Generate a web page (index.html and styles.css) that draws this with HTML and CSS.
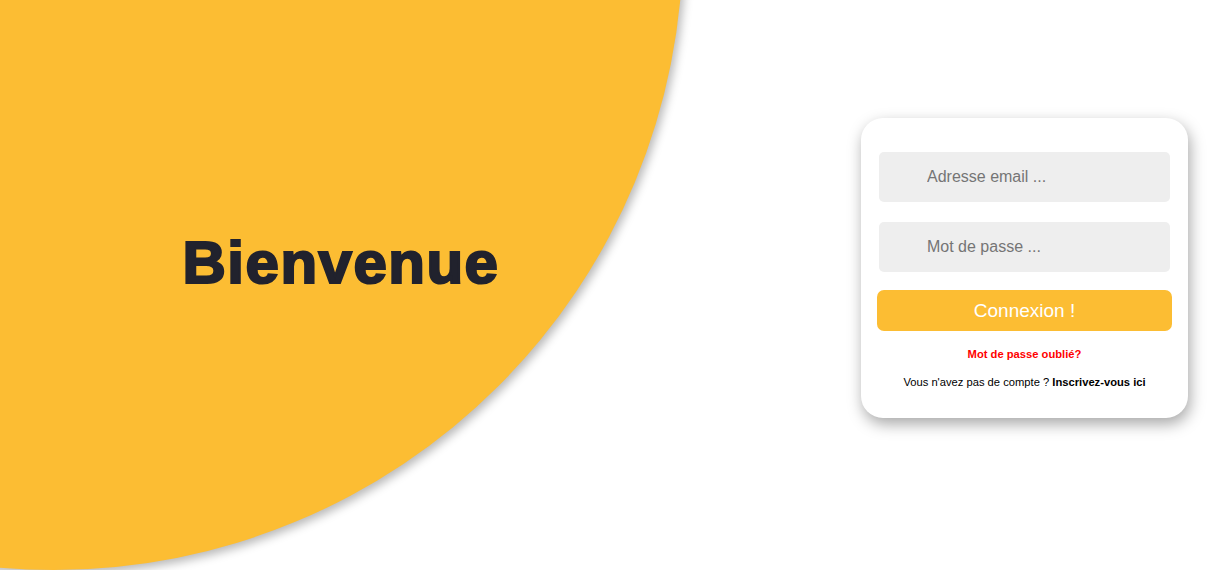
FILE: index.html
```html
<!DOCTYPE html>
<html lang="fr">
<head>
<meta charset="utf-8">
<title>Connexion</title>
<link rel="stylesheet" href="styles.css">
</head>
<body>
<main class="page">
  <section class="welcome">
    <h1 class="welcome-title">Bienvenue</h1>
  </section>
  <section class="auth">
    <form class="card">
      <input class="field" type="email" placeholder="Adresse email ...">
      <input class="field field-gap" type="password" placeholder="Mot de passe ...">
      <button class="submit" type="button">Connexion !</button>
      <a class="forgot" href="#">Mot de passe oublié?</a>
      <p class="signup">Vous n'avez pas de compte ? <a class="signup-link" href="#">Inscrivez-vous ici</a></p>
    </form>
  </section>
</main>
</body>
</html>
```
FILE: styles.css
```css
* { box-sizing: border-box; }

html, body {
  margin: 0;
  padding: 0;
  height: 100%;
  background: #ffffff;
  font-family: "Liberation Sans", Arial, sans-serif;
  overflow: hidden;
}

.page {
  position: relative;
  display: flex;
  height: 100vh;
  overflow: hidden;
}

.page::before {
  content: "";
  position: absolute;
  left: -575px;
  top: -688px;
  width: 1258px;
  height: 1258px;
  border-radius: 50%;
  background: #fcbd33;
  box-shadow: 3px 4px 10px rgba(0, 0, 0, 0.28);
  z-index: 0;
}

.welcome {
  position: relative;
  z-index: 1;
  width: 682px;
  display: flex;
  align-items: center;
  justify-content: center;
  padding-bottom: 46px;
}

.welcome-title {
  margin: 0;
  font-size: 60px;
  font-weight: 700;
  line-height: 69px;
  letter-spacing: 1.5px;
  color: #21222d;
  -webkit-text-stroke: 2.2px #21222d;
}

.auth {
  position: relative;
  z-index: 1;
  flex: 1;
  display: flex;
  align-items: center;
  justify-content: flex-end;
  padding-right: 20px;
  padding-bottom: 34px;
}

.card {
  width: 327px;
  height: 300px;
  background: #ffffff;
  border-radius: 22px;
  box-shadow: 2px 6px 15px rgba(0, 0, 0, 0.35);
  display: flex;
  flex-direction: column;
  align-items: center;
  padding-top: 34px;
}

.field {
  width: 291px;
  height: 50px;
  border: none;
  border-radius: 5px;
  background: #eeeeee;
  padding: 0 0 0 48px;
  font-family: "Liberation Sans", Arial, sans-serif;
  font-size: 16px;
  color: #333;
  outline: none;
}

.field::placeholder { color: #757575; }

.field-gap { margin-top: 20px; }

.submit {
  margin-top: 18px;
  width: 295px;
  height: 41px;
  border: none;
  border-radius: 7px;
  background: #fcbd33;
  color: #ffffff;
  font-family: "Liberation Sans", Arial, sans-serif;
  font-size: 19px;
  cursor: pointer;
}

.forgot {
  margin-top: 16px;
  font-size: 11.2px;
  font-weight: 700;
  color: #ff0000;
  text-decoration: none;
  line-height: 14px;
}

.signup {
  margin: 14px 0 0;
  font-size: 11.2px;
  line-height: 14px;
  color: #000000;
}

.signup-link {
  font-weight: 700;
  color: #000000;
  text-decoration: none;
}
```
